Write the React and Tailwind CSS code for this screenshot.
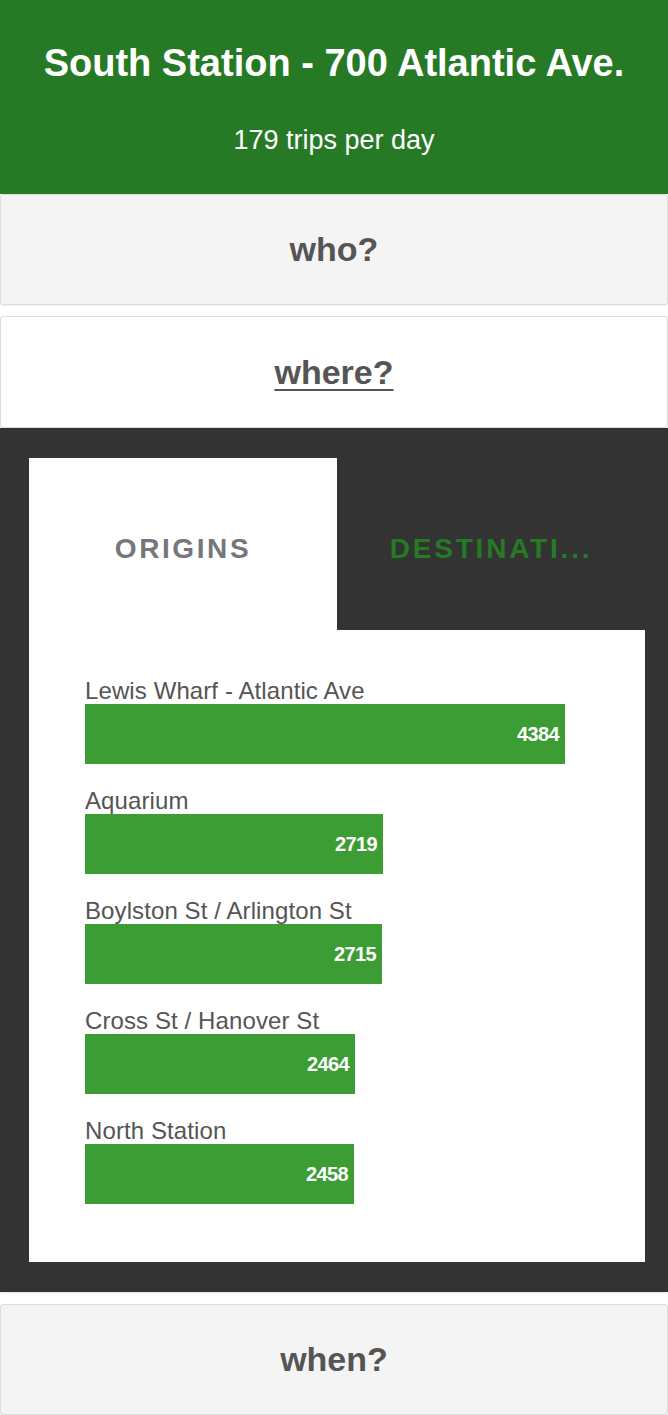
const origins = [
  { name: 'Lewis Wharf - Atlantic Ave', trips: 4384 },
  { name: 'Aquarium', trips: 2719 },
  { name: 'Boylston St / Arlington St', trips: 2715 },
  { name: 'Cross St / Hanover St', trips: 2464 },
  { name: 'North Station', trips: 2458 },
];

const MAX_BAR = 480;

function Section({ children, className = '' }) {
  return (
    <div className={`rounded-[3px] border border-[#ddd] shadow-[0_1px_1px_rgba(0,0,0,0.05)] ${className}`}>
      {children}
    </div>
  );
}

export default function App() {
  const top = Math.max(...origins.map((o) => o.trips));

  return (
    <div className="min-h-[1415px] bg-white font-['Liberation_Sans',Arial,sans-serif]">
      <header className="flex h-[194px] flex-col items-center bg-[#267a25] text-white">
        <h1 className="mt-[41px] text-[38px] font-bold leading-[44px]">South Station - 700 Atlantic Ave.</h1>
        <p className="mt-[39px] text-[27px] leading-[32px]">179 trips per day</p>
      </header>

      <Section className="flex h-[111px] items-center justify-center bg-[#f4f4f4]">
        <span className="text-[34px] font-bold text-[#555]">who?</span>
      </Section>

      <Section className="mt-[11px] flex h-[112px] items-center justify-center bg-white">
        <span className="text-[34px] font-bold text-[#555] underline decoration-2 underline-offset-[5px]">where?</span>
      </Section>

      <div className="bg-[#333] pt-[30px] pb-[30px] pl-[29px] pr-[23px] shadow-[0_1px_2px_rgba(0,0,0,0.12)]">
        <div className="grid grid-cols-2">
          <div className="flex h-[172px] items-center justify-center bg-white pt-[9px]">
            <span className="text-[28px] font-bold tracking-[2.6px] text-[#75777b]">ORIGINS</span>
          </div>
          <div className="flex h-[172px] items-center justify-center pt-[9px]">
            <span className="text-[28px] font-bold tracking-[2.8px] text-[#267a25]">DESTINATI...</span>
          </div>
        </div>

        <div className="bg-white pt-[48px] pb-[34px] pl-[56px]">
          {origins.map((o) => (
            <div key={o.name} className="mb-[24px]">
              <div className="text-[24px] leading-[26px] tracking-[0.1px] text-[#555]">{o.name}</div>
              <div
                className="flex h-[60px] items-center justify-end bg-[#3d9d35] pr-[6px]"
                style={{ width: `${Math.round((o.trips / top) * MAX_BAR)}px` }}
              >
                <span className="text-[20px] font-bold tracking-[-0.6px] text-white">{o.trips}</span>
              </div>
            </div>
          ))}
        </div>
      </div>

      <Section className="mt-[12px] flex h-[111px] items-center justify-center bg-[#f4f4f4]">
        <span className="text-[34px] font-bold text-[#555]">when?</span>
      </Section>
    </div>
  );
}
